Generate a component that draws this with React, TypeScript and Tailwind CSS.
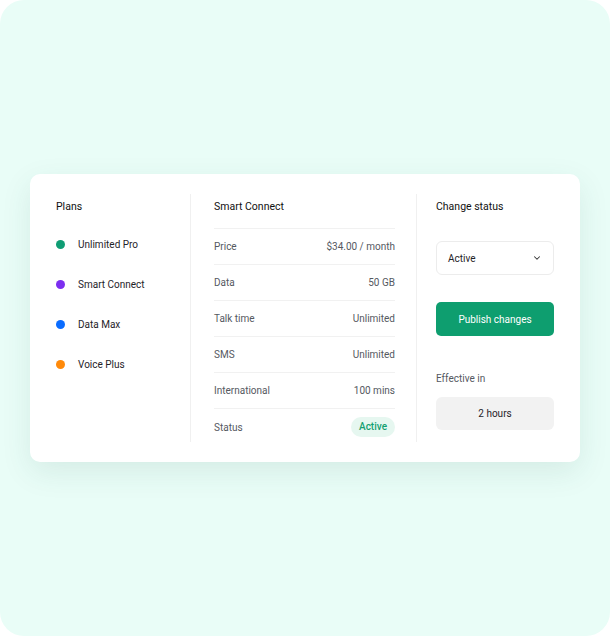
import React, { useState } from 'react';
import { ChevronDown } from 'lucide-react';

interface Plan {
  name: string;
  dot: string;
}

const plans: Plan[] = [
  { name: 'Unlimited Pro', dot: 'bg-[#0f9d74]' },
  { name: 'Smart Connect', dot: 'bg-[#7c2ef0]' },
  { name: 'Data Max', dot: 'bg-[#0a6cff]' },
  { name: 'Voice Plus', dot: 'bg-[#ff8a0a]' },
];

const details = [
  { label: 'Price', value: '$34.00 / month' },
  { label: 'Data', value: '50 GB' },
  { label: 'Talk time', value: 'Unlimited' },
  { label: 'SMS', value: 'Unlimited' },
  { label: 'International', value: '100 mins' },
];

export default function App() {
  const [status] = useState('Active');

  return (
    <div className="bg-white">
      <div className="w-[610px] h-[636px] rounded-[24px] bg-[#e9fdf7] flex items-center justify-center font-['Roboto',sans-serif] text-[10px] text-[#1f2328]">
        <div className="w-[550px] h-[288px] bg-white rounded-[10px] shadow-[0_10px_30px_rgba(40,90,80,0.10)] flex py-[20px]">
          {/* plans */}
          <div className="w-[161px] pl-[26px] border-r border-[#f0f0f0]">
            <div className="h-[26px] leading-[26px] text-[10.5px] text-[#111]">Plans</div>
            <div className="flex flex-col mt-[4px]">
              {plans.map((p) => (
                <div key={p.name} className="flex items-center h-[40px]">
                  <span className={`w-[9px] h-[9px] rounded-full ${p.dot}`} />
                  <span className="ml-[13px]">{p.name}</span>
                </div>
              ))}
            </div>
          </div>

          {/* details */}
          <div className="w-[226px] pl-[23px] pr-[21px] border-r border-[#f0f0f0]">
            <div className="h-[26px] leading-[26px] text-[10.5px] text-[#111]">Smart Connect</div>
            <div className="border-t border-[#f1f1f1] mt-[8px]">
              {details.map((d) => (
                <div
                  key={d.label}
                  className="flex justify-between items-center h-[36px] border-b border-[#f1f1f1] text-[#55595f]"
                >
                  <span>{d.label}</span>
                  <span>{d.value}</span>
                </div>
              ))}
              <div className="flex justify-between items-center h-[36px] text-[#55595f]">
                <span>Status</span>
                <span className="bg-[#e6f7f0] text-[#13a071] rounded-full px-[8px] h-[20px] leading-[20px] font-medium">
                  Active
                </span>
              </div>
            </div>
          </div>

          {/* change status */}
          <div className="flex-1 pl-[19px] pr-[26px]">
            <div className="h-[26px] leading-[26px] text-[10.5px] text-[#111]">Change status</div>
            <button className="mt-[21px] w-full h-[34px] border border-[#ececec] rounded-[6px] flex items-center justify-between px-[11px]">
              <span>{status}</span>
              <ChevronDown size={10} strokeWidth={2.5} className="text-[#333]" />
            </button>
            <button className="mt-[27px] w-full h-[34px] rounded-[5px] bg-[#0e9e6f] text-white">
              Publish changes
            </button>
            <div className="mt-[33px] h-[20px] leading-[20px] text-[#55595f]">Effective in</div>
            <div className="mt-[8px] w-full h-[33px] rounded-[6px] bg-[#f2f2f2] flex items-center justify-center">
              2 hours
            </div>
          </div>
        </div>
      </div>
    </div>
  );
}
